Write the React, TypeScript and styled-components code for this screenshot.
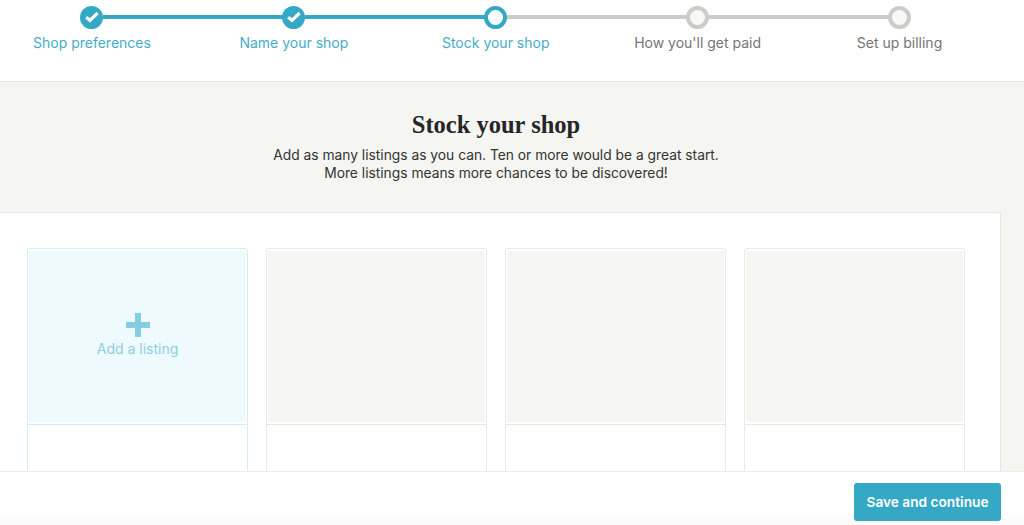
import React from 'react';
import styled, { createGlobalStyle } from 'styled-components';

const TEAL = '#34a8c4';
const GREY = '#cbcbc9';
const SANS = "Inter, 'Liberation Sans', sans-serif";

const steps = [
  { label: 'Shop preferences', state: 'done' },
  { label: 'Name your shop', state: 'done' },
  { label: 'Stock your shop', state: 'current' },
  { label: "How you'll get paid", state: 'todo' },
  { label: 'Set up billing', state: 'todo' }
];

type StepState = 'done' | 'current' | 'todo';

const App = () => (
  <Page>
    <GlobalStyle />
    <Header>
      <Stepper>
        {steps.map((step, i) => (
          <Step key={step.label}>
            <Track>
              <Segment
                blank={i === 0}
                active={step.state !== 'todo'}
              />
              <Dot state={step.state as StepState}>
                {step.state === 'done' && (
                  <svg width="16" height="14" viewBox="0 0 16 14">
                    <polyline
                      points="2.2,7.2 6,10.4 13.6,3"
                      fill="none"
                      stroke="#fff"
                      strokeWidth="3.2"
                    />
                  </svg>
                )}
              </Dot>
              <Segment
                blank={i === steps.length - 1}
                active={step.state === 'done'}
              />
            </Track>
            <StepLabel active={step.state !== 'todo'}>{step.label}</StepLabel>
          </Step>
        ))}
      </Stepper>
    </Header>

    <Main>
      <Intro>
        <Title>Stock your shop</Title>
        <Lead>
          Add as many listings as you can. Ten or more would be a great start.
          <br />
          More listings means more chances to be discovered!
        </Lead>
      </Intro>
      <Panel>
        <AddCard>
          <AddFrame>
            <AddThumb>
              <svg width="24" height="24" viewBox="0 0 24 24">
                <path d="M9 0h6v9h9v6h-9v9H9v-9H0V9h9z" fill="#85cde0" />
              </svg>
              <AddLabel>Add a listing</AddLabel>
            </AddThumb>
          </AddFrame>
        </AddCard>
        <Card>
          <ThumbFrame>
            <Thumb />
          </ThumbFrame>
        </Card>
        <Card>
          <ThumbFrame>
            <Thumb />
          </ThumbFrame>
        </Card>
        <Card>
          <ThumbFrame>
            <Thumb />
          </ThumbFrame>
        </Card>
      </Panel>
    </Main>

    <Footer>
      <SaveButton>Save and continue</SaveButton>
    </Footer>
  </Page>
);

export default App;

const GlobalStyle = createGlobalStyle`
  html, body {
    margin: 0;
    padding: 0;
    background: #fff;
  }
`;

const Page = styled.div`
  display: flex;
  flex-direction: column;
  width: 1024px;
  height: 525px;
  overflow: hidden;
  font-family: ${SANS};
`;

const Header = styled.header`
  flex: none;
  height: 82px;
  padding-top: 6px;
  box-sizing: border-box;
  border-bottom: 1px solid #e6e6e3;
  background: #fff;
`;

const Stepper = styled.div`
  display: grid;
  grid-template-columns: repeat(5, 201.9px);
  margin-left: -9px;
`;

const Step = styled.div`
  display: flex;
  flex-direction: column;
  align-items: center;
`;

const Track = styled.div`
  display: flex;
  align-items: center;
  width: 100%;
  height: 22px;
`;

const Segment = styled.div<{ blank?: boolean; active: boolean }>`
  flex: 1;
  height: 4px;
  background: ${({ active, blank }) =>
    blank ? 'transparent' : active ? TEAL : GREY};
`;

const Dot = styled.div<{ state: StepState }>`
  display: flex;
  align-items: center;
  justify-content: center;
  flex: none;
  width: 23px;
  height: 23px;
  margin: 0 -0.5px;
  box-sizing: border-box;
  border-radius: 50%;
  border: ${({ state }) => (state === 'done' ? 0 : 4)}px solid
    ${({ state }) => (state === 'todo' ? GREY : TEAL)};
  background: ${({ state }) =>
    state === 'done' ? TEAL : state === 'todo' ? '#f8f8f5' : '#fff'};
`;

const StepLabel = styled.span<{ active: boolean }>`
  margin-top: 6px;
  font-size: 14px;
  line-height: 18px;
  color: ${({ active }) => (active ? '#43aec9' : '#757575')};
`;

const Main = styled.main`
  flex: 1;
  min-height: 0;
  overflow: hidden;
  background: #f5f5f1;
`;

const Intro = styled.section`
  width: 992px;
  height: 130px;
  box-sizing: border-box;
  padding-top: 27px;
  text-align: center;
`;

const Title = styled.h1`
  margin: 0;
  font-family: 'Liberation Serif', serif;
  font-size: 24.5px;
  line-height: 32px;
  font-weight: 700;
  color: #262626;
`;

const Lead = styled.p`
  margin: 5px 0 0;
  font-size: 13.8px;
  line-height: 18px;
  color: #333;
`;

const Panel = styled.section`
  display: flex;
  gap: 18px;
  width: 1001px;
  height: 400px;
  box-sizing: border-box;
  padding: 35px 0 0 27px;
  background: #fff;
  border: 1px solid #e6e6e3;
  border-left: none;
  border-radius: 0 3px 0 0;
`;

const Card = styled.div`
  width: 221px;
  height: 240px;
  box-sizing: border-box;
  border: 1px solid #e8e8e5;
  border-radius: 3px;
`;

const AddCard = styled(Card)`
  border-color: #d0ecf5;
`;

const ThumbFrame = styled.div`
  padding: 2px 1px;
  border-bottom: 1px solid #e8e8e5;
`;

const AddFrame = styled(ThumbFrame)`
  border-bottom-color: #d0ecf5;
`;

const Thumb = styled.div`
  height: 171px;
  background: #f5f5f1;
`;

const AddThumb = styled(Thumb)`
  display: flex;
  flex-direction: column;
  align-items: center;
  padding-top: 62px;
  box-sizing: border-box;
  background: #eefafd;
`;

const AddLabel = styled.span`
  margin-top: 3px;
  font-size: 14px;
  line-height: 18px;
  color: #8ad0e2;
`;

const Footer = styled.footer`
  display: flex;
  flex: none;
  align-items: flex-start;
  justify-content: flex-end;
  height: 54px;
  box-sizing: border-box;
  padding: 11px 23px 0 0;
  border-top: 1px solid #ececea;
  background: linear-gradient(#fff 76%, #fbfbfb 90%);
`;

const SaveButton = styled.button`
  width: 147px;
  height: 38px;
  padding: 0;
  border: none;
  border-radius: 3px;
  background: ${TEAL};
  color: #fff;
  font-family: ${SANS};
  font-size: 13.7px;
  font-weight: 600;
`;
